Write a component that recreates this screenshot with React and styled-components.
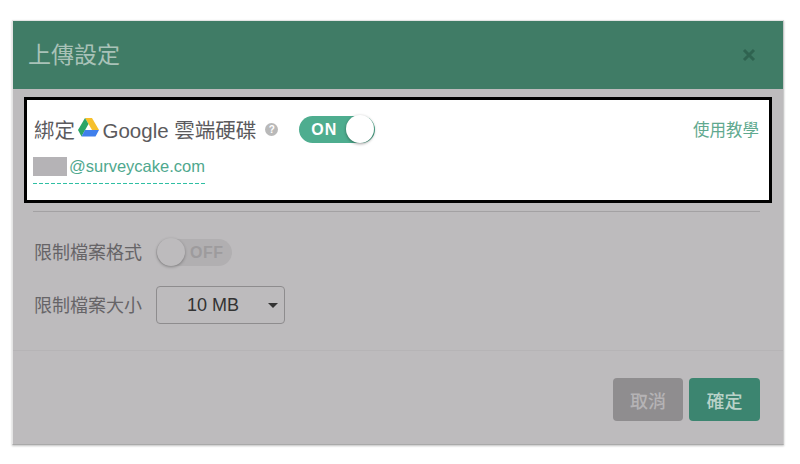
import React from 'react'
import styled, { createGlobalStyle } from 'styled-components'

const FONT = '"Liberation Sans", "Noto Sans CJK TC", sans-serif'

const Global = createGlobalStyle`
    html, body {
        margin: 0;
        padding: 0;
        background: #fff;
    }
    * {
        box-sizing: border-box;
    }
`
const Page = styled.div`
    width: 800px;
    height: 464px;
    padding: 20px 0 0 12px;
    overflow: hidden;
    font-family: ${FONT};
`
const Modal = styled.div`
    width: 772px;
    height: 425px;
    display: flex;
    flex-direction: column;
    background: #bdbbbd;
    border: 1px solid #e4e4e4;
    border-right-color: #c9c9c9;
    border-bottom-color: #a9a9a9;
    box-shadow: 0 1px 2px rgba(0, 0, 0, .25);
`
const Header = styled.div`
    height: 68px;
    flex-shrink: 0;
    display: flex;
    align-items: center;
    justify-content: space-between;
    padding: 0 27px 0 15px;
    background: #407c66;
`
const Title = styled.h1`
    margin: 0 0 4px;
    font-size: 23px;
    font-weight: 400;
    color: #a9c2b8;
`
const Close = styled.svg`
    width: 14px;
    height: 14px;
`
const Body = styled.div`
    flex: 1;
    padding: 8px 11px 0;
`
const Highlight = styled.div`
    height: 106px;
    padding: 15px 10px 0 6px;
    background: #fff;
    border: 3px solid #000;
`
const TopRow = styled.div`
    display: flex;
    align-items: center;
    height: 28px;
`
const BindLabel = styled.span`
    display: flex;
    align-items: center;
    padding-left: 1px;
    font-size: 20.5px;
    color: #5b5a5d;
    white-space: nowrap;
`
const DriveIcon = styled.svg`
    width: 21px;
    height: 19px;
    margin: -4px 4px 0 2.5px;
`
const Help = styled.span`
    width: 13px;
    height: 13px;
    margin: 1px 0 0 9px;
    border-radius: 50%;
    background: #b9b9b9;
    color: #fff;
    font-size: 10px;
    font-weight: 700;
    line-height: 13px;
    text-align: center;
`
const Track = styled.div`
    position: relative;
    width: 76px;
    height: 27px;
    flex-shrink: 0;
    margin-left: ${p => p.$ml}px;
    border-radius: 14px;
    background: ${p => (p.$on ? '#4ead8f' : '#b1afb1')};
    color: ${p => (p.$on ? '#fff' : '#9d9b9d')};
    font-size: 16px;
    font-weight: 700;
    line-height: 27px;
    letter-spacing: ${p => (p.$on ? 1 : 0.5)}px;
    padding-left: ${p => (p.$on ? 12 : 34)}px;
`
const Knob = styled.span`
    position: absolute;
    top: -1px;
    left: ${p => (p.$on ? 47 : 1)}px;
    width: 28px;
    height: 28px;
    border-radius: 50%;
    background: ${p => (p.$on ? '#fff' : '#bdbbbd')};
    box-shadow: 0 1px 3px rgba(0, 0, 0, ${p => (p.$on ? '.4' : '.3')});
`
const Tutorial = styled.a`
    margin-left: auto;
    font-size: 16.5px;
    color: #5fa98f;
    white-space: nowrap;
`
const Account = styled.div`
    display: inline-flex;
    align-items: center;
    width: 173px;
    height: 29px;
    margin-top: 12px;
    padding-bottom: 7px;
    background: repeating-linear-gradient(90deg, #2fbfa3 0 4px, transparent 4px 6px) left bottom / 100% 1px no-repeat;
    font-size: 16.5px;
    color: #4fa88e;
    white-space: nowrap;
`
const Masked = styled.span`
    width: 34px;
    height: 19px;
    margin-right: 2px;
    background: #b5b3b6;
`
const Divider = styled.div`
    height: 1px;
    margin: 8px 12px 0 9px;
    background: #a3a1a3;
`
const Settings = styled.div`
    display: flex;
    flex-direction: column;
    gap: 19px;
    padding: 26px 0 0 10px;
`
const SettingRow = styled.div`
    display: flex;
    align-items: center;
    gap: 14px;
    min-height: 28px;
`
const SettingLabel = styled.span`
    width: 108px;
    margin-bottom: 3px;
    font-size: 18px;
    color: #666467;
    white-space: nowrap;
`
const Select = styled.div`
    position: relative;
    width: 129px;
    height: 38px;
    padding-left: 30px;
    border: 1px solid #8e8c8e;
    border-radius: 4px;
    font-size: 18px;
    line-height: 37px;
    color: #333;
`
const Caret = styled.span`
    position: absolute;
    top: 16px;
    right: 6px;
    border-top: 5px solid #333;
    border-left: 5px solid transparent;
    border-right: 5px solid transparent;
`
const Footer = styled.div`
    height: 94px;
    flex-shrink: 0;
    display: flex;
    justify-content: flex-end;
    gap: 6px;
    padding: 27px 23px 0 0;
    border-top: 1px solid #b6b4b6;
`
const Button = styled.button`
    width: ${p => p.$w}px;
    height: 43px;
    padding: 0;
    border: none;
    border-radius: 4px;
    background: ${p => (p.$primary ? '#3c8570' : '#8f8d8f')};
    color: ${p => (p.$primary ? '#b9d2c8' : '#b5b3b5')};
    font-family: ${FONT};
    font-size: 18px;
    font-weight: 500;
`

function Toggle({ on, ml = 0 }) {
    return (
        <Track $on={on} $ml={ml}>
            {on ? 'ON' : 'OFF'}
            <Knob $on={on} />
        </Track>
    )
}

function App() {
    return (
        <Page>
            <Global />
            <Modal>
                <Header>
                    <Title>上傳設定</Title>
                    <Close viewBox="0 0 14 14">
                        <path d="M2 2 L12 12 M12 2 L2 12" stroke="#2f6350" strokeWidth="3" />
                    </Close>
                </Header>
                <Body>
                    <Highlight>
                        <TopRow>
                            <BindLabel>
                                綁定
                                <DriveIcon viewBox="0 0 21 19">
                                    <path d="M7 0 H14 L21 12 H14 Z" fill="#f6c02c" />
                                    <path d="M7 0 L10.5 6 L3.5 18.5 L0 12 Z" fill="#2ba566" />
                                    <path d="M7 12 H21 L17.5 18.5 H3.5 Z" fill="#3f7fec" />
                                </DriveIcon>
                                Google 雲端硬碟
                            </BindLabel>
                            <Help>?</Help>
                            <Toggle on ml={21} />
                            <Tutorial>使用教學</Tutorial>
                        </TopRow>
                        <Account>
                            <Masked />
                            @surveycake.com
                        </Account>
                    </Highlight>
                    <Divider />
                    <Settings>
                        <SettingRow>
                            <SettingLabel>限制檔案格式</SettingLabel>
                            <Toggle />
                        </SettingRow>
                        <SettingRow>
                            <SettingLabel>限制檔案大小</SettingLabel>
                            <Select>
                                10 MB
                                <Caret />
                            </Select>
                        </SettingRow>
                    </Settings>
                </Body>
                <Footer>
                    <Button $w={70}>取消</Button>
                    <Button $w={71} $primary>確定</Button>
                </Footer>
            </Modal>
        </Page>
    )
}

export default App
